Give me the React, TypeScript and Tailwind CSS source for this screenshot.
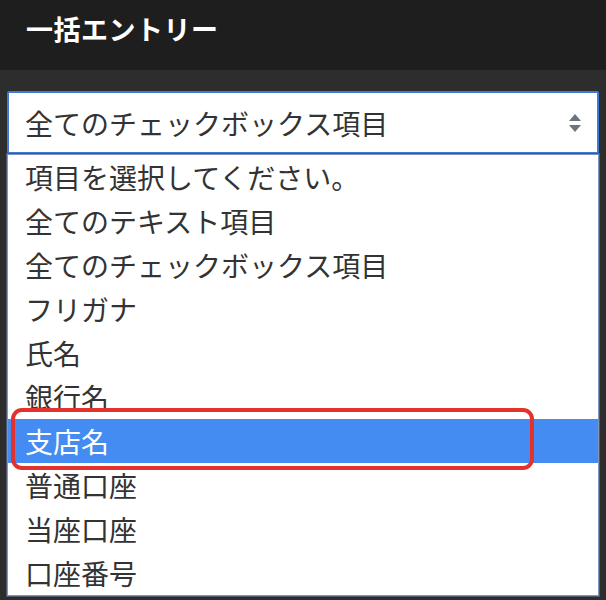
import React from "react";

const OPTIONS = [
  "項目を選択してください。",
  "全てのテキスト項目",
  "全てのチェックボックス項目",
  "フリガナ",
  "氏名",
  "銀行名",
  "支店名",
  "普通口座",
  "当座口座",
  "口座番号",
];

const SELECTED = 6;

function SortArrows() {
  return (
    <svg width="16" height="22" viewBox="0 0 16 22" className="shrink-0">
      <path d="M8 2 L14 9 H2 Z" fill="#6b7280" />
      <path d="M8 20 L14 13 H2 Z" fill="#6b7280" />
    </svg>
  );
}

export default function App() {
  return (
    <div
      className="w-[606px] h-[600px] overflow-hidden bg-[#2d2d2e] flex flex-col"
      style={{ fontFamily: '"Noto Sans CJK JP", "Noto Sans", sans-serif' }}
    >
      {/* header */}
      <div className="h-[70px] shrink-0 bg-[#1f1e1f] flex items-center pl-[26px] pb-[14px]">
        <h1 className="text-[27px] font-bold text-white leading-none tracking-[0.5px]">一括エントリー</h1>
      </div>

      <div className="pt-[21px] px-[7px]">
        {/* select */}
        <div className="h-[63px] bg-white border-2 border-[#3c7ad6] rounded-[2px] flex items-center justify-between pl-[16px] pr-[14px]">
          <span className="text-[28px] leading-none text-[#333]">全てのチェックボックス項目</span>
          <SortArrows />
        </div>

        {/* open list */}
        <div className="bg-white border border-[#8594bd] shadow-[0_0_0_1px_#4b5670]">
          {OPTIONS.map((opt, i) => (
            <div
              key={opt}
              className={
                i === SELECTED
                  ? "relative h-[44px] flex items-center pl-[17px] text-[28px] leading-none bg-[#448cf2] text-white"
                  : "h-[44px] flex items-center pl-[17px] text-[28px] leading-none text-[#333]"
              }
            >
              {opt}
              {i === SELECTED && (
                <div className="absolute left-[3px] top-[-11px] w-[523px] h-[62px] border-[4px] border-[#e3322b] rounded-[11px] pointer-events-none" />
              )}
            </div>
          ))}
        </div>
      </div>
    </div>
  );
}
